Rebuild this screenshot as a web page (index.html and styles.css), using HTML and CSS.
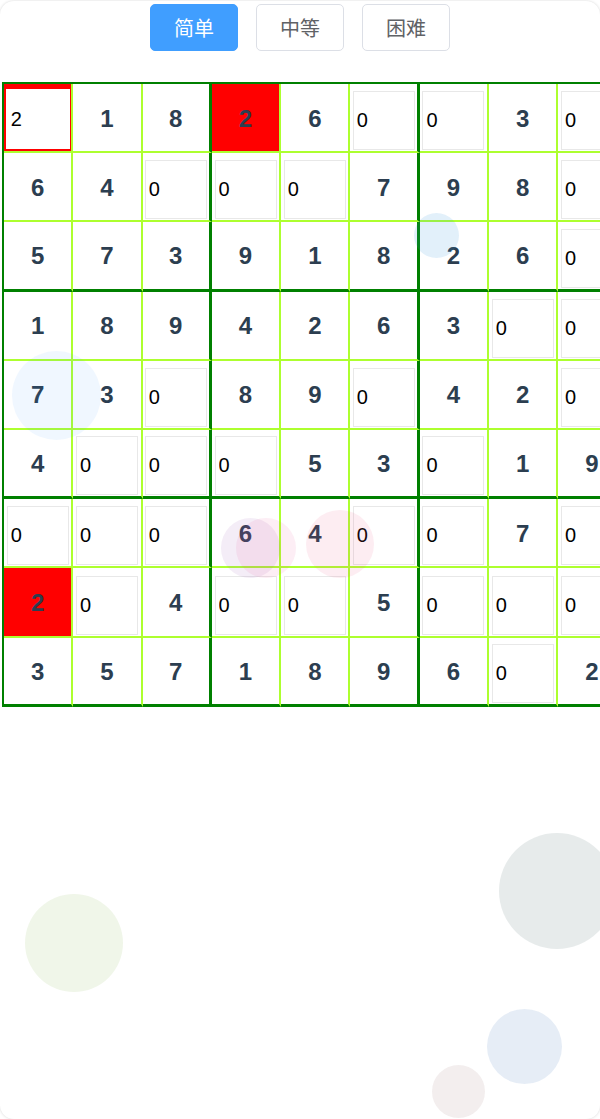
FILE: index.html
```html
<!DOCTYPE html>
<html lang="zh">
<head>
<meta charset="utf-8">
<title>数独</title>
<link rel="stylesheet" href="styles.css">
</head>
<body>
<div class="app">
  <div class="toolbar">
    <button class="btn active">简单</button>
    <button class="btn">中等</button>
    <button class="btn">困难</button>
  </div>
  <div class="board">
    <!-- row 0 -->
    <div class="cell bad"><input class="inp focus" value="2"></div>
    <div class="cell"><span class="num">1</span></div>
    <div class="cell br"><span class="num">8</span></div>
    <div class="cell bad"><span class="num">2</span></div>
    <div class="cell"><span class="num">6</span></div>
    <div class="cell br"><input class="inp" value="0"></div>
    <div class="cell"><input class="inp" value="0"></div>
    <div class="cell"><span class="num">3</span></div>
    <div class="cell"><input class="inp" value="0"></div>
    <!-- row 1 -->
    <div class="cell"><span class="num">6</span></div>
    <div class="cell"><span class="num">4</span></div>
    <div class="cell br"><input class="inp" value="0"></div>
    <div class="cell"><input class="inp" value="0"></div>
    <div class="cell"><input class="inp" value="0"></div>
    <div class="cell br"><span class="num">7</span></div>
    <div class="cell"><span class="num">9</span></div>
    <div class="cell"><span class="num">8</span></div>
    <div class="cell"><input class="inp" value="0"></div>
    <!-- row 2 -->
    <div class="cell bb"><span class="num">5</span></div>
    <div class="cell bb"><span class="num">7</span></div>
    <div class="cell bb br"><span class="num">3</span></div>
    <div class="cell bb"><span class="num">9</span></div>
    <div class="cell bb"><span class="num">1</span></div>
    <div class="cell bb br"><span class="num">8</span></div>
    <div class="cell bb"><span class="num">2</span></div>
    <div class="cell bb"><span class="num">6</span></div>
    <div class="cell bb"><input class="inp" value="0"></div>
    <!-- row 3 -->
    <div class="cell"><span class="num">1</span></div>
    <div class="cell"><span class="num">8</span></div>
    <div class="cell br"><span class="num">9</span></div>
    <div class="cell"><span class="num">4</span></div>
    <div class="cell"><span class="num">2</span></div>
    <div class="cell br"><span class="num">6</span></div>
    <div class="cell"><span class="num">3</span></div>
    <div class="cell"><input class="inp" value="0"></div>
    <div class="cell"><input class="inp" value="0"></div>
    <!-- row 4 -->
    <div class="cell"><span class="num">7</span></div>
    <div class="cell"><span class="num">3</span></div>
    <div class="cell br"><input class="inp" value="0"></div>
    <div class="cell"><span class="num">8</span></div>
    <div class="cell"><span class="num">9</span></div>
    <div class="cell br"><input class="inp" value="0"></div>
    <div class="cell"><span class="num">4</span></div>
    <div class="cell"><span class="num">2</span></div>
    <div class="cell"><input class="inp" value="0"></div>
    <!-- row 5 -->
    <div class="cell bb"><span class="num">4</span></div>
    <div class="cell bb"><input class="inp" value="0"></div>
    <div class="cell bb br"><input class="inp" value="0"></div>
    <div class="cell bb"><input class="inp" value="0"></div>
    <div class="cell bb"><span class="num">5</span></div>
    <div class="cell bb br"><span class="num">3</span></div>
    <div class="cell bb"><input class="inp" value="0"></div>
    <div class="cell bb"><span class="num">1</span></div>
    <div class="cell bb"><span class="num">9</span></div>
    <!-- row 6 -->
    <div class="cell"><input class="inp" value="0"></div>
    <div class="cell"><input class="inp" value="0"></div>
    <div class="cell br"><input class="inp" value="0"></div>
    <div class="cell"><span class="num">6</span></div>
    <div class="cell"><span class="num">4</span></div>
    <div class="cell br"><input class="inp" value="0"></div>
    <div class="cell"><input class="inp" value="0"></div>
    <div class="cell"><span class="num">7</span></div>
    <div class="cell"><input class="inp" value="0"></div>
    <!-- row 7 -->
    <div class="cell bad"><span class="num">2</span></div>
    <div class="cell"><input class="inp" value="0"></div>
    <div class="cell br"><span class="num">4</span></div>
    <div class="cell"><input class="inp" value="0"></div>
    <div class="cell"><input class="inp" value="0"></div>
    <div class="cell br"><span class="num">5</span></div>
    <div class="cell"><input class="inp" value="0"></div>
    <div class="cell"><input class="inp" value="0"></div>
    <div class="cell"><input class="inp" value="0"></div>
    <!-- row 8 -->
    <div class="cell bb"><span class="num">3</span></div>
    <div class="cell bb"><span class="num">5</span></div>
    <div class="cell bb br"><span class="num">7</span></div>
    <div class="cell bb"><span class="num">1</span></div>
    <div class="cell bb"><span class="num">8</span></div>
    <div class="cell bb br"><span class="num">9</span></div>
    <div class="cell bb"><span class="num">6</span></div>
    <div class="cell bb"><input class="inp" value="0"></div>
    <div class="cell bb"><span class="num">2</span></div>
  </div>

  <div class="bubble b1"></div>
  <div class="bubble b2"></div>
  <div class="bubble b3"></div>
  <div class="bubble b4"></div>
  <div class="bubble b5"></div>
  <div class="bubble b6"></div>
  <div class="bubble b7"></div>
  <div class="bubble b8"></div>
  <div class="bubble b9"></div>
</div>
</body>
</html>
```

FILE: styles.css
```css
html, body {
  margin: 0;
  padding: 0;
  background: #ffffff;
  overflow: hidden;
}

body {
  font-family: "Liberation Sans", Arial, "Noto Sans CJK SC", sans-serif;
}

.app {
  position: relative;
  margin: 1px 0 0 0;
  height: 1118px;
  border-radius: 14px;
  background: #ffffff;
  box-shadow: 0 0 3px rgba(0, 0, 0, 0.16);
  overflow: hidden;
  padding-top: 3px;
  box-sizing: border-box;
}

.toolbar {
  display: flex;
  justify-content: center;
  gap: 18px;
}

.btn {
  font-family: "Noto Sans CJK SC", "Liberation Sans", sans-serif;
  font-size: 20px;
  line-height: 21px;
  padding: 12px 23px;
  border: 1px solid #dcdfe6;
  border-radius: 5px;
  background: #ffffff;
  color: #606266;
  margin: 0;
}

.btn.active {
  background: #409eff;
  border-color: #409eff;
  color: #ffffff;
}

.board {
  display: grid;
  grid-template-columns: repeat(9, 69.3px);
  grid-auto-rows: 69.2px;
  width: max-content;
  margin-top: 31px;
  margin-left: 2px;
  border-top: 2px solid #008000;
  border-left: 2px solid #008000;
}

.cell {
  box-sizing: border-box;
  border-right: 2px solid #adff2f;
  border-bottom: 2px solid #adff2f;
  display: flex;
  align-items: center;
  justify-content: center;
  background: #ffffff;
}

.cell.br {
  border-right: 3px solid #008000;
}

.cell.bb {
  border-bottom: 3px solid #008000;
}

.cell.bad {
  background: #ff0000;
}

.num {
  font-size: 24px;
  font-weight: bold;
  color: #2c3e50;
  line-height: 1;
  padding-top: 2px;
}

.cell:has(.inp) {
  align-items: flex-end;
}

.inp {
  box-sizing: border-box;
  width: 62px;
  height: 59px;
  margin-bottom: 1px;
  border: 1px solid #e8e8e8;
  padding: 0 0 0 3px;
  font-family: "Liberation Sans", Arial, sans-serif;
  font-size: 20px;
  color: #000000;
  background: #ffffff;
  outline: none;
}

.inp.focus {
  width: 66px;
  height: 62px;
  margin-bottom: 1px;
  border: 1px solid #ff0000;
  padding-left: 5px;
}

.bubble {
  position: absolute;
  border-radius: 50%;
  pointer-events: none;
}

.b1 { left: 414px; top: 212px; width: 45px; height: 45px; background: rgba(52, 152, 219, 0.14); }
.b2 { left: 12px; top: 350px; width: 89px; height: 89px; background: rgba(64, 158, 255, 0.08); }
.b3 { left: 221px; top: 517px; width: 59px; height: 60px; background: rgba(155, 89, 182, 0.11); }
.b4 { left: 236px; top: 517px; width: 60px; height: 60px; background: rgba(232, 67, 147, 0.09); }
.b5 { left: 306px; top: 509px; width: 68px; height: 68px; background: rgba(240, 80, 130, 0.1); }
.b6 { left: 25px; top: 893px; width: 98px; height: 98px; background: rgba(110, 170, 40, 0.1); }
.b7 { left: 499px; top: 832px; width: 116px; height: 116px; background: rgba(60, 90, 90, 0.12); }
.b8 { left: 487px; top: 1008px; width: 75px; height: 75px; background: rgba(50, 110, 180, 0.12); }
.b9 { left: 432px; top: 1064px; width: 53px; height: 53px; background: rgba(140, 90, 90, 0.1); }
```
